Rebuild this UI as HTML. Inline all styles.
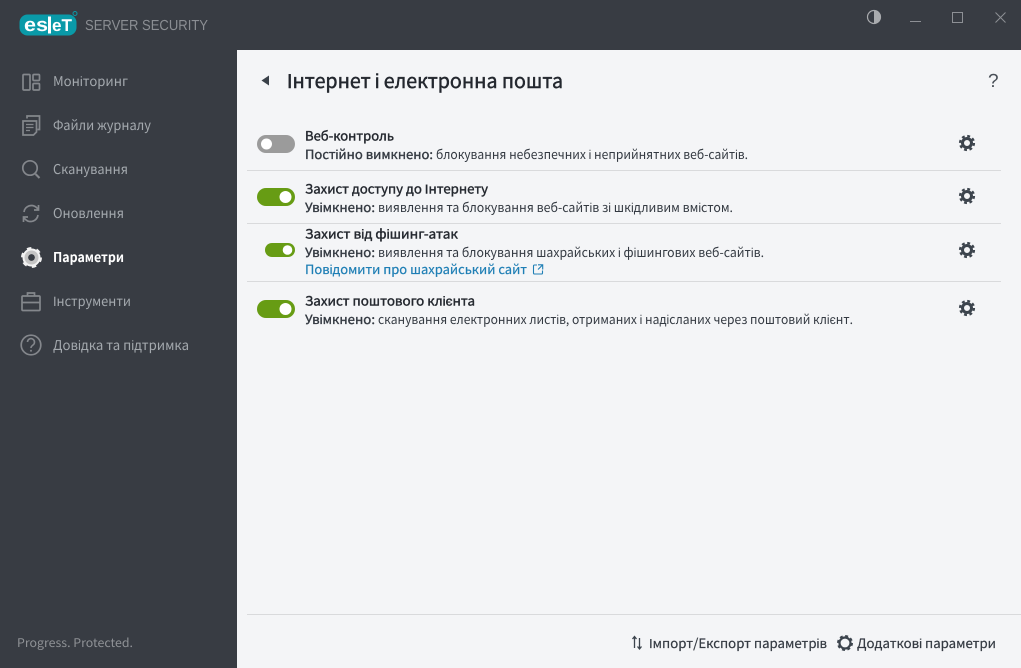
<!DOCTYPE html>
<html><head><meta charset="utf-8">
<style>
html,body{margin:0;padding:0;width:1021px;height:668px;overflow:hidden;background:#383c43}
svg{display:block;font-family:"Noto Sans CJK JP","Liberation Sans",sans-serif}
text{text-rendering:geometricPrecision}
.n{font-size:13.5px;fill:#a4a9ae}
.b{font-size:12.8px;fill:#24282f;stroke:#24282f;stroke-width:.4px}
.d{font-size:12.8px;fill:#343a42}
.s{stroke:#343a42;stroke-width:.35px}
.m{stroke:#343a42;stroke-width:.2px}
</style></head><body>
<svg width="1021" height="668" viewBox="0 0 1021 668" xmlns="http://www.w3.org/2000/svg">
<rect width="1021" height="668" fill="#383c43"/>
<rect x="237" y="50" width="784" height="618" fill="#f4f5f7"/>

<!-- logo -->
<rect x="19.500" y="14.500" width="57" height="21" rx="8" fill="#0a9aa8"/>
<rect x="48" y="16.500" width="3" height="17" fill="#fff"/>
<text x="24" y="31" font-size="19" font-weight="bold" fill="#fff" textLength="24" lengthAdjust="spacingAndGlyphs" style="font-family:'Liberation Sans'">es</text>
<text x="52" y="31" font-size="17" font-weight="bold" fill="#fff" textLength="20" lengthAdjust="spacingAndGlyphs" style="font-family:'Liberation Sans'">eT</text>
<circle cx="75" cy="13.500" r="2" fill="none" stroke="#0a9aa8" stroke-width="1"/>
<text x="85" y="30" font-size="14.500" fill="#8b8e93" textLength="123" lengthAdjust="spacingAndGlyphs" style="font-family:'Liberation Sans'">SERVER SECURITY</text>

<!-- window controls -->
<circle cx="874" cy="17" r="6.500" fill="none" stroke="#a9abae" stroke-width="1.200"/>
<path d="M874 10.500a6.500 6.500 0 0 1 0 13z" fill="#a9abae"/>
<rect x="910" y="21" width="11" height="1" fill="#8d9095"/>
<rect x="952.500" y="12.500" width="10" height="10" fill="none" stroke="#8d9095" stroke-width="1"/>
<path d="M995.500 12.500l10 10M1005.500 12.500l-10 10" stroke="#8d9095" stroke-width="1" fill="none"/>

<!-- sidebar icons -->
<g fill="none" stroke="#84878c" stroke-width="1.700">
<rect x="23" y="74.500" width="7" height="15.500" rx="1"/>
<rect x="33" y="74.500" width="6.500" height="6" rx="1"/>
<rect x="33" y="83.500" width="6.500" height="6.500" rx="1"/>
<path d="M27 118.500v-2.500h12.500v13.500h-2"/>
<path d="M23 121h13.500v11l-3 3h-10.500z"/>
<path d="M26 124.500h7.500M26 127.500h7.500M26 130.500h4" stroke-width="1.200"/>
<circle cx="30" cy="168" r="7.200"/>
<path d="M35.500 174l4 4" stroke-width="2"/>
<path d="M24 212a7.500 7.500 0 0 1 12.500-4.500l2 2"/>
<path d="M38.500 205v5h-4.500"/>
<path d="M38 215a7.500 7.500 0 0 1-12.500 4.500l-2-2"/>
<path d="M23.500 222v-5h4.500"/>
<rect x="22" y="296" width="18" height="14.500" rx="1"/>
<path d="M22 302.500h18M27.500 296v-3h7v3"/>
<circle cx="31" cy="345" r="9.800"/>
</g>
<path d="M27.500 342a3.500 3.500 0 1 1 5.500 3c-1.300 .9-2 1.500-2 3" fill="none" stroke="#84878c" stroke-width="1.600"/>
<circle cx="31" cy="350.700" r="1" fill="#84878c"/>
<!-- selected gear -->
<circle cx="31.500" cy="257.500" r="5.700" fill="none" stroke="#c4c4c4" stroke-width="5"/>
<circle cx="31.500" cy="257.500" r="8" fill="none" stroke="#f2f2f2" stroke-width="2"/>
<circle cx="31.500" cy="257.500" r="9.500" fill="none" stroke="#f2f2f2" stroke-width="2" stroke-dasharray="4.500 5.450"/>
<circle cx="31.500" cy="257.500" r="3.300" fill="#383c43"/>

<!-- sidebar text -->
<text class="n" x="53" y="86" textLength="75" lengthAdjust="spacingAndGlyphs">Моніторинг</text>
<text class="n" x="53" y="130" textLength="98" lengthAdjust="spacingAndGlyphs">Файли журналу</text>
<text class="n" x="53" y="174" textLength="75" lengthAdjust="spacingAndGlyphs">Сканування</text>
<text class="n" x="53" y="218" textLength="71" lengthAdjust="spacingAndGlyphs">Оновлення</text>
<text class="n" x="53" y="262" textLength="71" lengthAdjust="spacingAndGlyphs" style="font-weight:bold;fill:#fff">Параметри</text>
<text class="n" x="53" y="306" textLength="78" lengthAdjust="spacingAndGlyphs">Інструменти</text>
<text class="n" x="53" y="350" textLength="136" lengthAdjust="spacingAndGlyphs">Довідка та підтримка</text>
<text x="17" y="647" font-size="12" fill="#8f9296" textLength="116" lengthAdjust="spacingAndGlyphs">Progress. Protected.</text>

<!-- header -->
<path d="M269 75.500v10l-7.500-5z" fill="#3a4149"/>
<text x="287" y="88" font-size="20" fill="#23272e" stroke="#23272e" stroke-width=".45" textLength="276" lengthAdjust="spacingAndGlyphs">Інтернет і електронна пошта</text>
<text x="988" y="87" font-size="19" fill="#4a5058" style="font-family:'Liberation Sans'">?</text>

<!-- rows -->
<rect x="257" y="135" width="38" height="18" rx="9" fill="#9b9b9b"/>
<circle cx="266.500" cy="144" r="5.500" fill="#fff"/>
<text class="b" x="305" y="140.500" textLength="89" lengthAdjust="spacingAndGlyphs">Веб-контроль</text>
<text class="d s" x="305" y="159" textLength="128" lengthAdjust="spacingAndGlyphs">Постійно вимкнено:</text>
<text class="d" x="436" y="159" textLength="312" lengthAdjust="spacingAndGlyphs">блокування небезпечних і неприйнятних веб-сайтів.</text>
<rect x="247" y="170" width="754" height="1" fill="#d9dadc"/>

<rect x="257" y="188" width="38" height="18" rx="9" fill="#679c14"/>
<circle cx="285.500" cy="197" r="6" fill="#fff"/>
<text class="b" x="305" y="193.500" textLength="183" lengthAdjust="spacingAndGlyphs">Захист доступу до Інтернету</text>
<text class="d s" x="305" y="212" textLength="70" lengthAdjust="spacingAndGlyphs">Увімкнено:</text>
<text class="d" x="378" y="212" textLength="355" lengthAdjust="spacingAndGlyphs">виявлення та блокування веб-сайтів зі шкідливим вмістом.</text>
<rect x="247" y="223" width="754" height="1" fill="#d9dadc"/>

<rect x="265" y="243" width="30" height="14" rx="7" fill="#679c14"/>
<circle cx="287.500" cy="250" r="4.800" fill="#fff"/>
<text class="b" x="305" y="238.500" textLength="153" lengthAdjust="spacingAndGlyphs">Захист від фішинг-атак</text>
<text class="d s" x="305" y="257" textLength="70" lengthAdjust="spacingAndGlyphs">Увімкнено:</text>
<text class="d" x="378" y="257" textLength="386" lengthAdjust="spacingAndGlyphs">виявлення та блокування шахрайських і фішингових веб-сайтів.</text>
<text x="305" y="274" font-size="12.800" fill="#1f7fb5" stroke="#1f7fb5" stroke-width=".2" textLength="222" lengthAdjust="spacingAndGlyphs">Повідомити про шахрайський сайт</text>
<path d="M537 265h-2.500a1 1 0 0 0-1 1v7a1 1 0 0 0 1 1h7a1 1 0 0 0 1-1v-2.500M538 264.800h4.700v4.700M542.500 265l-4.500 4.500" fill="none" stroke="#1f7fb5" stroke-width="1.100"/>
<rect x="247" y="281" width="754" height="1" fill="#d9dadc"/>

<rect x="257" y="300" width="38" height="18" rx="9" fill="#679c14"/>
<circle cx="285.500" cy="309" r="6" fill="#fff"/>
<text class="b" x="305" y="305.500" textLength="170" lengthAdjust="spacingAndGlyphs">Захист поштового клієнта</text>
<text class="d s" x="305" y="324" textLength="70" lengthAdjust="spacingAndGlyphs">Увімкнено:</text>
<text class="d" x="378" y="324" textLength="475" lengthAdjust="spacingAndGlyphs">сканування електронних листів, отриманих і надісланих через поштовий клієнт.</text>

<!-- row gears -->
<g fill="none" stroke="#3c444d">
<circle cx="967" cy="143" r="4.500" stroke-width="3"/><circle cx="967" cy="143" r="7" stroke-width="2.200" stroke-dasharray="2.900 2.600"/>
<circle cx="967" cy="196" r="4.500" stroke-width="3"/><circle cx="967" cy="196" r="7" stroke-width="2.200" stroke-dasharray="2.900 2.600"/>
<circle cx="967" cy="250" r="4.500" stroke-width="3"/><circle cx="967" cy="250" r="7" stroke-width="2.200" stroke-dasharray="2.900 2.600"/>
<circle cx="967" cy="308" r="4.500" stroke-width="3"/><circle cx="967" cy="308" r="7" stroke-width="2.200" stroke-dasharray="2.900 2.600"/>
<circle cx="845" cy="643" r="5.500" stroke-width="2.200"/><circle cx="845" cy="643" r="7.100" stroke-width="1.800" stroke-dasharray="3 2.570"/>
</g>

<!-- footer -->
<rect x="247" y="614" width="774" height="1" fill="#d9dadc"/>
<path d="M634.500 648v-11M632.500 639l2-2.500 2 2.500M639.500 638v11M637.500 646.500l2 2.500 2-2.500" fill="none" stroke="#3c444d" stroke-width="1.300"/>
<text class="m" x="649" y="648" font-size="13" fill="#343a42" textLength="178" lengthAdjust="spacingAndGlyphs">Імпорт/Експорт параметрів</text>
<text class="m" x="857" y="648" font-size="13" fill="#343a42" textLength="139" lengthAdjust="spacingAndGlyphs">Додаткові параметри</text>
</svg>
</body></html>
